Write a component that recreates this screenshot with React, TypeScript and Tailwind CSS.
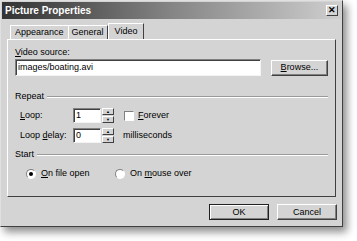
import React from 'react';

const FONT = { fontFamily: '"Liberation Sans", Arial, sans-serif' };

function Spin({ value }: { value: string }) {
  return (
    <div className="flex items-center">
      <div className="flex h-[15px] w-[28px] items-center bg-white pl-[2px] border border-t-[#808080] border-l-[#808080] border-r-[#f4f4f4] border-b-[#f4f4f4] shadow-[inset_1px_1px_0_#404040]">
        {value}
      </div>
      <div className="ml-[1px] flex h-[15px] w-[12px] flex-col">
        <div className="flex h-[7px] items-center justify-center border border-t-white border-l-white border-r-[#404040] border-b-[#404040] bg-[#d4d4d4] text-[4px] leading-none">
          ▲
        </div>
        <div className="mt-[1px] flex h-[7px] items-center justify-center border border-t-white border-l-white border-r-[#404040] border-b-[#404040] bg-[#d4d4d4] text-[4px] leading-none">
          ▼
        </div>
      </div>
    </div>
  );
}

function Group({ label }: { label: string }) {
  return (
    <div className="flex items-center gap-[3px]">
      <span>{label}</span>
      <div className="h-[2px] flex-1 border-t border-t-[#9a9a9a] border-b border-b-white" />
    </div>
  );
}

function Radio({ checked }: { checked?: boolean }) {
  return (
    <div className="flex h-[10px] w-[10px] items-center justify-center rounded-full border border-t-[#808080] border-l-[#808080] border-r-white border-b-white bg-white">
      {checked && <div className="h-[4px] w-[4px] rounded-full bg-black" />}
    </div>
  );
}

function Button({ children, def }: { children: React.ReactNode; def?: boolean }) {
  return (
    <div
      className={`flex h-[16px] items-center justify-center bg-[#d4d4d4] border ${
        def
          ? 'border-[#202020] shadow-[inset_1px_1px_0_#fff,inset_-1px_-1px_0_#808080]'
          : 'border-t-white border-l-white border-r-[#404040] border-b-[#404040] shadow-[inset_-1px_-1px_0_#808080]'
      }`}
    >
      {children}
    </div>
  );
}

export default function App() {
  return (
    <div className="h-[241px] w-[357px] whitespace-nowrap bg-white text-[9px] leading-[11px] text-black" style={FONT}>
      <div className="flex h-[227px] w-[343px] flex-col border border-t-[#e0e0e0] border-l-[#e0e0e0] border-r-[#404040] border-b-[#404040] bg-[#d4d4d4] p-[1px] shadow-[4px_5px_8px_rgba(0,0,0,0.45)]">
        <div className="flex h-[17px] items-center justify-between bg-gradient-to-r from-[#333333] via-[#858585] to-[#cfcfcf] pl-[3px] pr-[3px]">
          <span className="text-[10px] font-bold text-white">Picture Properties</span>
          <div className="flex h-[11px] w-[12px] items-center justify-center border border-t-white border-l-white border-r-[#404040] border-b-[#404040] bg-[#d4d4d4] text-[9px] font-bold leading-none">
            ✕
          </div>
        </div>

        <div className="mt-[4px] flex flex-col px-[5px]">
          <div className="flex h-[16px] items-end pl-[3px]">
            <div className="flex h-[14px] items-center border-l border-t border-l-white border-t-white px-[4px]">
              Appearance
            </div>
            <div className="flex h-[14px] items-center border-l border-t border-r border-l-white border-t-white border-r-[#404040] px-[3px]">
              General
            </div>
            <div className="-mb-[1px] flex h-[17px] items-center border-l border-t border-r border-l-white border-t-white border-r-[#404040] bg-[#d4d4d4] px-[6px] pb-[2px]">
              Video
            </div>
          </div>

          <div className="flex h-[158px] flex-col border border-t-white border-l-white border-r-[#404040] border-b-[#404040] px-[7px] pt-[7px]">
            <div>
              <span className="underline">V</span>ideo source:
            </div>
            <div className="mt-[1px] flex items-center gap-[10px]">
              <div className="flex h-[17px] w-[249px] items-center bg-white pl-[2px] border border-t-[#808080] border-l-[#808080] border-r-[#f4f4f4] border-b-[#f4f4f4] shadow-[inset_1px_1px_0_#404040]">
                images/boating.avi
              </div>
              <div className="w-[58px]">
                <Button>
                  <span className="leading-[11px]">
                    <span className="underline">B</span>rowse...
                  </span>
                </Button>
              </div>
            </div>

            <div className="mt-[15px]">
              <Group label="Repeat" />
            </div>
            <div className="mt-[6px] flex items-center pl-[5px]">
              <span className="w-[53px]">
                <span className="underline">L</span>oop:
              </span>
              <Spin value="1" />
              <div className="ml-[10px] h-[10px] w-[10px] border border-t-[#808080] border-l-[#808080] border-r-white border-b-white bg-white" />
              <span className="ml-[4px]">
                <span className="underline">F</span>orever
              </span>
            </div>
            <div className="mt-[5px] flex items-center pl-[5px]">
              <span className="w-[53px]">
                Loop <span className="underline">d</span>elay:
              </span>
              <Spin value="0" />
              <span className="ml-[9px]">milliseconds</span>
            </div>

            <div className="mt-[6px]">
              <Group label="Start" />
            </div>
            <div className="mt-[8px] flex items-center pl-[11px]">
              <Radio checked />
              <span className="ml-[5px] w-[74px]">
                <span className="underline">O</span>n file open
              </span>
              <Radio />
              <span className="ml-[5px]">
                On <span className="underline">m</span>ouse over
              </span>
            </div>
          </div>

          <div className="mt-[7px] flex justify-end gap-[8px] -mr-[1px]">
            <div className="w-[60px]">
              <Button def>OK</Button>
            </div>
            <div className="w-[60px]">
              <Button>Cancel</Button>
            </div>
          </div>
        </div>
      </div>
    </div>
  );
}
